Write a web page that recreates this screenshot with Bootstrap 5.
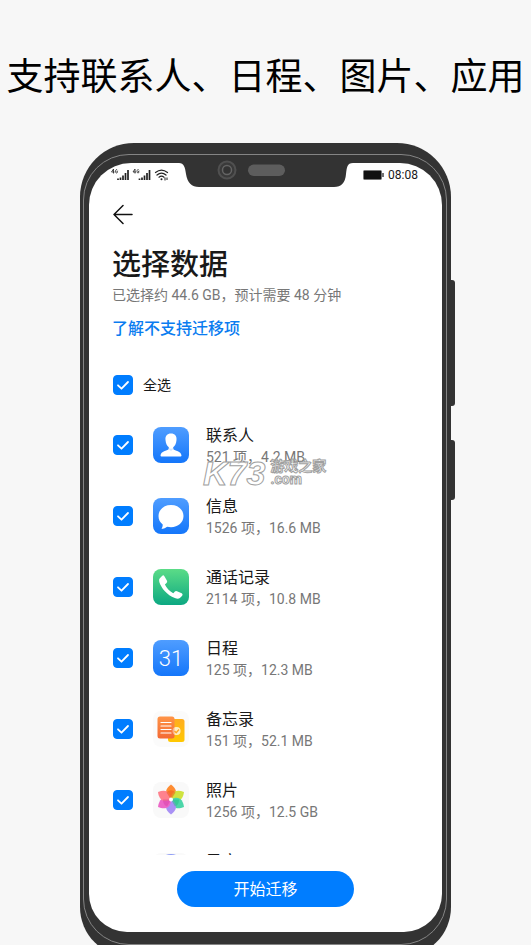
<!DOCTYPE html>
<html lang="zh-CN">
<head>
<meta charset="utf-8">
<meta name="viewport" content="width=device-width, initial-scale=1">
<title>选择数据</title>
<link href="https://cdn.jsdelivr.net/npm/bootstrap@5.3.0/dist/css/bootstrap.min.css" rel="stylesheet">
<style>
body { background: #f7f7f7; color: #191919; font-family: Roboto, "Noto Sans CJK SC", sans-serif; }
.headline { font-size: 37px; line-height: 52px; font-weight: 400; color: #000; margin: 52px 0 39px; }
.phone { width: calc(100% - 32px); max-width: 371px; min-height: 0; margin-bottom: -12px; padding: 20px 9px 25px; background: #333; border-radius: 54px 54px 50px 50px; }
.phone-ring { inset: 11px 4px 12px 3px; border: 1px solid #858585; border-radius: 46px; }
.side-key { left: 100%; width: 4px; background: #333; border-radius: 0 3px 3px 0; }
.key-volume { top: 137px; height: 126px; }
.key-power { top: 297px; height: 60px; }
.screen { border-radius: 42px 42px 38px 38px; min-height: 0; }
.notch { top: 0; left: 50%; margin-left: -86px; overflow: visible; }
.status { height: 24px; padding: 0 24px 0 22px; }
.clock { font-size: 12px; line-height: 24px; }
.page-pad { padding: 0 23px; }
.back { margin: 16px 0 0 1px; }
.page-title { font-size: 29px; line-height: 40px; font-weight: 500; margin: 20px 0 0; }
.summary { font-size: 14px; line-height: 20px; color: #777; }
.learn { font-size: 16px; line-height: 20px; font-weight: 500; color: #0a7cf0; margin-top: 14px; }
.form-check-input.tick { width: 20px; height: 20px; border-radius: 4px; margin: 0; flex: none; }
.form-check-input.tick:checked { background-color: #007dff; border-color: #007dff; background-size: 20px; background-image: url("data:image/svg+xml,%3Csvg xmlns='http://www.w3.org/2000/svg' viewBox='0 0 20 20'%3E%3Cpath fill='none' stroke='%23fff' stroke-width='1.800' stroke-linecap='round' stroke-linejoin='round' d='M5 10.300L8.500 13.700L15 7'/%3E%3C/svg%3E"); }
.all-row { margin-top: 36px; padding-left: 24px; gap: 10px; font-size: 14px; line-height: 20px; }
.data-list { min-height: 0; overflow: hidden; padding: 14px 24px 0 24px; }
.data-row { height: 71px; flex: none; }
.data-row label { padding-top: 3px; }
.app-icon { width: 36px; height: 36px; margin: 0 17px 0 20px; flex: none; }
.item-name { font-size: 16px; line-height: 22px; font-weight: 400; }
.item-size { font-size: 14px; line-height: 20px; color: #777; }
.bottom-bar { padding: 16px 88px 25px; }
.start-btn { background: #007dff; color: #fff; font-size: 16px; line-height: 24px; padding: 7px 0 5px; font-weight: 400; }
.start-btn:hover { background: #006fe6; color: #fff; }
.stamp { left: 114px; top: 295px; gap: 5px; color: #ffffffb0; pointer-events: none; -webkit-text-stroke: 1px #a0a0a0; }
.stamp-logo { font: italic 700 34px/30px "Liberation Sans", sans-serif; }
.stamp-side { font-size: 14px; line-height: 13px; font-weight: 700; }
</style>
</head>
<body>
<svg class="position-absolute" width="0" height="0" aria-hidden="true">
  <defs>
    <linearGradient id="blue" x1="0" y1="0" x2="0" y2="1"><stop offset="0" stop-color="#4f9dff"/><stop offset="1" stop-color="#1476fa"/></linearGradient>
    <linearGradient id="green" x1="0" y1="0" x2="0" y2="1"><stop offset="0" stop-color="#5bdc87"/><stop offset="1" stop-color="#0ca882"/></linearGradient>
    <linearGradient id="orange" x1="0" y1="0" x2="0" y2="1"><stop offset="0" stop-color="#ff9447"/><stop offset="1" stop-color="#f36a35"/></linearGradient>
    <linearGradient id="amber" x1="0" y1="0" x2="0" y2="1"><stop offset="0" stop-color="#ffad1f"/><stop offset="1" stop-color="#ffc800"/></linearGradient>
  </defs>
</svg>
<main class="vh-100 overflow-hidden d-flex flex-column align-items-center">
  <h1 class="headline text-center text-nowrap">支持联系人、日程、图片、应用</h1>
  <div class="phone position-relative flex-grow-1 d-flex flex-column">
    <div class="phone-ring position-absolute"></div>
    <div class="side-key key-volume position-absolute"></div>
    <div class="side-key key-power position-absolute"></div>
    <div class="screen position-relative bg-white flex-grow-1 d-flex flex-column">
      <svg class="notch position-absolute" width="172" height="24" viewBox="180 163 172 24" aria-hidden="true">
        <path d="M179 163C184 163 185 167 186 174Q188 187 199 187H334Q345 187 346 174C347 167 347 163 353 163Z" fill="#333"/>
        <circle cx="227" cy="170" r="8.500" fill="#3a3a3a" stroke="#505050" stroke-width="2"/>
        <circle cx="227" cy="170" r="4.500" fill="#333" stroke="#646464" stroke-width="1.500"/>
        <rect x="248" y="164.500" width="37" height="11.500" rx="5.700" fill="#5d5d5d"/>
      </svg>
      <div class="status d-flex justify-content-between align-items-center">
        <svg width="58" height="14" viewBox="0 0 58 14" aria-hidden="true">
          <g id="signal" stroke="#222" fill="none">
            <path d="M2.500 1L.500 4H3.500M2.500 1V5.500M6.500 2.300Q6 1.400 5.200 1.700Q4.500 2.200 4.500 3.200Q4.500 5 5.500 5Q6.500 5 6.500 3.500H5.600" stroke-width=".8"/>
            <path d="M7 12V10.500M9.500 12V9.500M12 12V7.500M14.500 12V5M17 12V2" stroke-width="1.700"/>
          </g>
          <use href="#signal" x="21.500"/>
          <g fill="none" stroke="#222" stroke-width="1.200" stroke-linecap="round"><path d="M44.500 4.500Q50.500 -.300 56.500 4.500M46 7Q50.500 3.300 55 7M48 9.200Q50.500 7.200 53 9.200"/></g>
          <circle cx="50.500" cy="11.300" r="1" fill="#222"/><path d="M54 9.500V12.500M56 9.500V12" stroke="#222"/>
        </svg>
        <div class="d-flex align-items-center gap-1">
          <svg width="21" height="10" viewBox="0 0 21 10" aria-hidden="true"><rect x=".5" y=".5" width="18" height="9" rx="1" fill="#111" stroke="#777"/><path d="M20 3V7" stroke="#444" stroke-width="1.500"/></svg>
          <span class="clock">08:08</span>
        </div>
      </div>
      <header class="page-pad">
        <button class="back btn p-0 border-0 d-block lh-1" type="button" aria-label="返回">
          <svg width="20" height="22" viewBox="0 0 20 22" fill="none" stroke="#111" stroke-width="1.500" stroke-linecap="round" stroke-linejoin="round"><path d="M19 11.500H1M10 2.500L1 11.500L10 20.500"/></svg>
        </button>
        <h2 class="page-title">选择数据</h2>
        <div class="summary">已选择约 44.6 GB，预计需要 48 分钟</div>
        <a class="learn d-block text-decoration-none" href="#">了解不支持迁移项</a>
      </header>
      <div class="all-row d-flex align-items-center">
        <input class="form-check-input tick" type="checkbox" id="all" checked><label for="all">全选</label>
      </div>
      <div class="data-list flex-grow-1 d-flex flex-column">
        <div class="data-row d-flex align-items-center">
          <input class="form-check-input tick" type="checkbox" id="c1" checked>
          <svg class="app-icon" viewBox="0 0 36 36"><rect width="36" height="36" rx="8" fill="url(#blue)"/><path d="M18 6.500C14.200 6.500 12 9 12.500 13C12.800 16.500 14 18.800 15.800 20.300V22C14 24.200 8 23.800 7.500 28.500Q7.500 29.500 8.500 29.500H27.500Q28.500 29.500 28.500 28.500C28 23.800 22 24.200 20.200 22V20.300C22 18.800 23.200 16.500 23.500 13C24 9 21.800 6.500 18 6.500Z" fill="#fff"/><path d="M15.800 21Q18 22.300 20.200 21V22L18 24L15.800 22Z" fill="#d5e6fb"/></svg>
          <label for="c1"><span class="item-name d-block">联系人</span><span class="item-size d-block">521 项，4.2 MB</span></label>
        </div>
        <div class="data-row d-flex align-items-center">
          <input class="form-check-input tick" type="checkbox" id="c2" checked>
          <svg class="app-icon" viewBox="0 0 36 36"><rect width="36" height="36" rx="8" fill="url(#blue)"/><path d="M18 7C10.800 7 5.500 11.800 5.500 18C5.500 21.800 7.200 24.500 9.700 26.500C9.800 28 9.400 29.300 8.800 30.300C8.500 31 9 31 9.600 30.800C11.600 30.200 12.900 29.600 14.300 28.700C15.500 29 16.700 29.200 18 29.200C25.200 29.200 30.500 24.300 30.500 18C30.500 11.800 25.200 7 18 7Z" fill="#fff"/></svg>
          <label for="c2"><span class="item-name d-block">信息</span><span class="item-size d-block">1526 项，16.6 MB</span></label>
        </div>
        <div class="data-row d-flex align-items-center">
          <input class="form-check-input tick" type="checkbox" id="c3" checked>
          <svg class="app-icon" viewBox="0 0 36 36"><rect width="36" height="36" rx="8" fill="url(#green)"/><path d="M6.800 9.200L9.300 6.700Q10.500 5.800 11.400 7.200L14 11.700Q14.600 12.900 13.500 13.900L11.900 15.500C13.500 19 16.500 22.200 20.300 24.200L21.900 22.600Q22.700 21.700 24 22.300L28.700 24.300Q30.200 25.200 29.200 26.700L26.900 29Q25.200 30.400 21.800 29.100C14 26 8.500 19.500 6.300 13Q5.600 10.500 6.800 9.200Z" fill="#fff"/></svg>
          <label for="c3"><span class="item-name d-block">通话记录</span><span class="item-size d-block">2114 项，10.8 MB</span></label>
        </div>
        <div class="data-row d-flex align-items-center">
          <input class="form-check-input tick" type="checkbox" id="c4" checked>
          <svg class="app-icon" viewBox="0 0 36 36"><rect width="36" height="36" rx="8" fill="url(#blue)"/><text x="18" y="26" text-anchor="middle" font-family="Roboto, sans-serif" font-weight="300" font-size="22" fill="#fff">31</text></svg>
          <label for="c4"><span class="item-name d-block">日程</span><span class="item-size d-block">125 项，12.3 MB</span></label>
        </div>
        <div class="data-row d-flex align-items-center">
          <input class="form-check-input tick" type="checkbox" id="c5" checked>
          <svg class="app-icon" viewBox="0 0 36 36"><rect width="36" height="36" rx="8" fill="#fbfbfb"/><rect x="15" y="8" width="16.500" height="23" rx="2.500" fill="url(#amber)"/><circle cx="23.500" cy="20" r="4" fill="#ffe39a"/><rect x="4.500" y="5.500" width="17" height="22" rx="2.500" fill="url(#orange)"/><path d="M8 11.500H18M8 15H18M8 18.500H18M8 22H18" stroke="#fff" stroke-width="1.200" stroke-linecap="round"/><circle cx="23.500" cy="20" r="4" fill="#fff" opacity=".4"/><path d="M21.500 20L23.200 21.700L26 18.500" fill="none" stroke="#ffa51f" stroke-width="1.300"/></svg>
          <label for="c5"><span class="item-name d-block">备忘录</span><span class="item-size d-block">151 项，52.1 MB</span></label>
        </div>
        <div class="data-row d-flex align-items-center">
          <input class="form-check-input tick" type="checkbox" id="c6" checked>
          <svg class="app-icon" viewBox="0 0 36 36"><rect width="36" height="36" rx="8" fill="#f9f9f9"/>
            <g opacity=".85">
            <path d="M18 17.500C10.500 13 12 7 18 2.500C24 7 25.500 13 18 17.500Z" fill="#ff7a10"/>
            <path d="M18 17.500C10.500 13 12 7 18 2.500C24 7 25.500 13 18 17.500Z" fill="#c8e020" transform="rotate(60 18 17.500)"/>
            <path d="M18 17.500C10.500 13 12 7 18 2.500C24 7 25.500 13 18 17.500Z" fill="#2fd19c" transform="rotate(120 18 17.500)"/>
            <path d="M18 17.500C10.500 13 12 7 18 2.500C24 7 25.500 13 18 17.500Z" fill="#9c80f5" transform="rotate(180 18 17.500)"/>
            <path d="M18 17.500C10.500 13 12 7 18 2.500C24 7 25.500 13 18 17.500Z" fill="#ea4fc0" transform="rotate(240 18 17.500)"/>
            <path d="M18 17.500C10.500 13 12 7 18 2.500C24 7 25.500 13 18 17.500Z" fill="#ff6e7c" transform="rotate(300 18 17.500)"/></g>
            <path d="M18 17.500L13.500 10.500Q18 6 22.500 10.500Z" fill="#f0601c" opacity=".6"/>
            <path d="M18 17.500L26 17.500Q26 23 22 24.500Z" fill="#1fbd86" opacity=".5"/>
            <path d="M18 17.500L14 24.500Q10 23 10 17.500Z" fill="#d83fa8" opacity=".5"/>
            <circle cx="18" cy="17.500" r="2" fill="#fff"/></svg>
          <label for="c6"><span class="item-name d-block">照片</span><span class="item-size d-block">1256 项，12.5 GB</span></label>
        </div>
        <div class="data-row d-flex align-items-center">
          <input class="form-check-input tick" type="checkbox" id="c7" checked>
          <svg class="app-icon" viewBox="0 0 36 36"><rect width="36" height="36" rx="8" fill="#fafafa"/><circle cx="18" cy="14" r="13" fill="#8e9cf5"/></svg>
          <label for="c7"><span class="item-name d-block">录音</span><span class="item-size d-block">&nbsp;</span></label>
        </div>
      </div>
      <div class="bottom-bar"><button class="start-btn btn rounded-pill border-0 w-100" type="button">开始迁移</button></div>
      <div class="stamp position-absolute d-flex align-items-center" aria-hidden="true">
        <span class="stamp-logo">K73</span><span class="stamp-side"><span class="d-block">游戏之家</span><span class="d-block">.com</span></span>
      </div>
    </div>
  </div>
</main>
<script src="https://cdn.jsdelivr.net/npm/bootstrap@5.3.0/dist/js/bootstrap.bundle.min.js"></script>
</body>
</html>
